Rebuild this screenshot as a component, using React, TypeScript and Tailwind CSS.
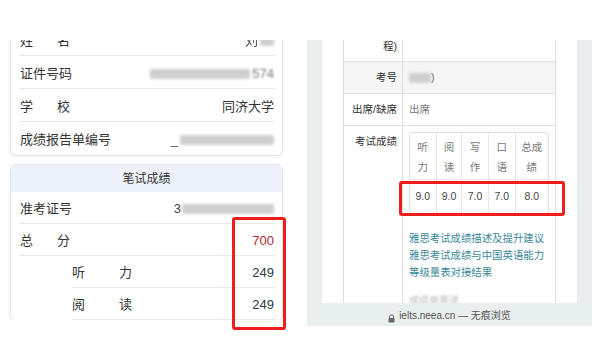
import React from 'react';

const cjk = { fontFamily: '"Liberation Sans", "Noto Sans CJK SC", sans-serif' };

const Blur: React.FC<{ w: number; className?: string }> = ({ w, className }) => (
  <div
    className={`h-[10px] rounded-[2px] bg-[#cfcfcf] blur-[1.5px] ${className ?? ''}`}
    style={{ width: w }}
  />
);

const Row: React.FC<{ label: React.ReactNode; children?: React.ReactNode; last?: boolean; indent?: boolean; tight?: boolean }> = ({
  label,
  children,
  last,
  indent,
  tight,
}) => (
  <div
    className={`flex items-center justify-between ${tight ? 'h-[32px]' : 'h-[33px]'} ${indent ? 'ml-[52px]' : ''} ${
      last ? '' : 'border-b border-[#e6e6e6]'
    }`}
  >
    <div className="text-[13px] text-[#333] pt-[3px]">{label}</div>
    <div className="flex items-center pr-[1px] pt-[3px] text-[13px]">{children}</div>
  </div>
);

const Spaced: React.FC<{ a: string; b: string; w?: number }> = ({ a, b, w = 37 }) => (
  <span className="flex">
    <span style={{ width: w }}>{a}</span>
    <span>{b}</span>
  </span>
);

const LeftPanel = () => (
  <div className="relative w-[300px] h-[342px] pt-[40px]">
    <div className="h-[280px] overflow-hidden pl-[10px] pr-[17px]">
      <div className="-mt-[18px] rounded-[6px] border border-[#e4e6ea] bg-white pl-[9px] pr-[7px] shadow-[0_1px_3px_rgba(0,0,0,0.06)]">
        <Row label={<Spaced a="姓" b="名" />}>
          <span className="text-[#555] blur-[0.6px] mr-[2px]">刘</span>
          <Blur w={14} className="h-[6px]" />
        </Row>
        <Row label="证件号码">
          <Blur w={100} className="mr-[2px]" />
          <span className="text-[#777] blur-[0.8px]">574</span>
        </Row>
        <Row label={<Spaced a="学" b="校" />}>
          <span className="text-[#333]">同济大学</span>
        </Row>
        <Row label="成绩报告单编号" last>
          <span className="text-[#555] mr-[2px]">_</span>
          <Blur w={94} />
        </Row>
      </div>
      <div className="mt-[8px] rounded-[6px] border border-[#e4e6ea] bg-white shadow-[0_1px_3px_rgba(0,0,0,0.06)]">
        <div className="flex h-[27px] items-center justify-center rounded-t-[6px] bg-[#edf2fa] pt-[1px] text-[12px] text-[#333]">
          笔试成绩
        </div>
        <div className="pl-[9px] pr-[7px]">
          <Row label="准考证号" tight>
            <span className="text-[#444] mr-[1px]">3</span>
            <Blur w={92} />
          </Row>
          <Row label={<Spaced a="总" b="分" />} tight>
            <span className="text-[#b02a2e]">700</span>
          </Row>
          <Row label={<Spaced a="听" b="力" w={47} />} indent tight>
            <span className="text-[#2f3a45]">249</span>
          </Row>
          <Row label={<Spaced a="阅" b="读" w={47} />} indent tight>
            <span className="text-[#2f3a45]">249</span>
          </Row>
        </div>
      </div>
    </div>
    <div className="absolute left-[232px] top-[217px] h-[113px] w-[54px] rounded-[3px] border-[3px] border-[#ef1d1d]" />
  </div>
);

const scoreCols = [
  { h: ['听', '力'], v: '9.0', w: 27 },
  { h: ['阅', '读'], v: '9.0', w: 26 },
  { h: ['写', '作'], v: '7.0', w: 27 },
  { h: ['口', '语'], v: '7.0', w: 27 },
  { h: ['总成', '绩'], v: '8.0', w: 33 },
];

const LockIcon = () => (
  <svg width="7" height="9" viewBox="0 0 7 9" className="mr-[4px]">
    <path d="M1.5 4V2.8a2 2 0 0 1 4 0V4" fill="none" stroke="#666" strokeWidth="1" />
    <rect x="0.5" y="4" width="6" height="4.5" rx="0.8" fill="#666" />
  </svg>
);

const RightPanel = () => (
  <div className="relative w-[300px] h-[342px] pt-[40px]">
    <div className="ml-[7px] flex h-[286px] w-[285px] flex-col bg-[#e9eeee]">
      <div className="mx-[15px] flex-1 overflow-hidden bg-white pl-[21px] pr-[21px]">
        <div className="border-x border-[#dedede] text-[10.5px] text-[#333]">
          <div className="flex h-[22px] border-b border-[#e2e2e2]">
            <div className="w-[59px] border-r border-[#dedede] pr-[5px] text-right leading-[12px]">程)</div>
            <div />
          </div>
          <div className="flex h-[32px] border-b border-[#e2e2e2] bg-[#f6f6f6]">
            <div className="flex w-[59px] items-center justify-end border-r border-[#dedede] pr-[5px]">考号</div>
            <div className="flex items-center pl-[6px]">
              <Blur w={22} className="h-[9px]" />
              <span className="text-[#666]">)</span>
            </div>
          </div>
          <div className="flex h-[32px] border-b border-[#e2e2e2]">
            <div className="flex w-[59px] items-center justify-end border-r border-[#dedede] pr-[5px]">出席/缺席</div>
            <div className="flex items-center pl-[6px] text-[#777]">出席</div>
          </div>
          <div className="flex h-[200px]">
            <div className="w-[59px] border-r border-[#dedede] pr-[5px] pt-[8px] text-right leading-[14px]">考试成绩</div>
            <div className="pl-[6px] pt-[6px]">
              <div className="flex w-[140px] overflow-hidden rounded-[3px] border border-[#e0e0e0]">
                {scoreCols.map((c, i) => (
                  <div
                    key={i}
                    className={`flex flex-col ${i < scoreCols.length - 1 ? 'border-r border-[#e6e6e6]' : ''}`}
                    style={{ width: c.w }}
                  >
                    <div className="flex h-[47px] flex-col items-center justify-center border-b border-[#e6e6e6] pt-[2px] leading-[20px] text-[#777]">
                      {c.h.map((t) => (
                        <span key={t}>{t}</span>
                      ))}
                    </div>
                    <div className="flex h-[33px] items-center justify-center pt-[1px] text-[#444]">{c.v}</div>
                  </div>
                ))}
              </div>
              <div className="mt-[16px] text-[10.4px] leading-[17px] text-[#3a8899]">
                <div>雅思考试成绩描述及提升建议</div>
                <div>雅思考试成绩与中国英语能力</div>
                <div>等级量表对接结果</div>
              </div>
              <div className="mt-[12px] text-[10px] text-[#bbb] blur-[1px]">成绩单寄送</div>
            </div>
          </div>
        </div>
      </div>
      <div className="flex h-[23px] items-end justify-center pb-[3px] text-[10px] text-[#555]">
        <LockIcon />
        <span>ielts.neea.cn — 无痕浏览</span>
      </div>
    </div>
    <div className="absolute left-[99px] top-[181px] h-[35px] w-[166px] rounded-[3px] border-[3px] border-[#ef1d1d]" />
  </div>
);

export default function App() {
  return (
    <div className="flex h-[342px] w-[600px] overflow-hidden bg-white" style={cjk}>
      <LeftPanel />
      <RightPanel />
    </div>
  );
}
